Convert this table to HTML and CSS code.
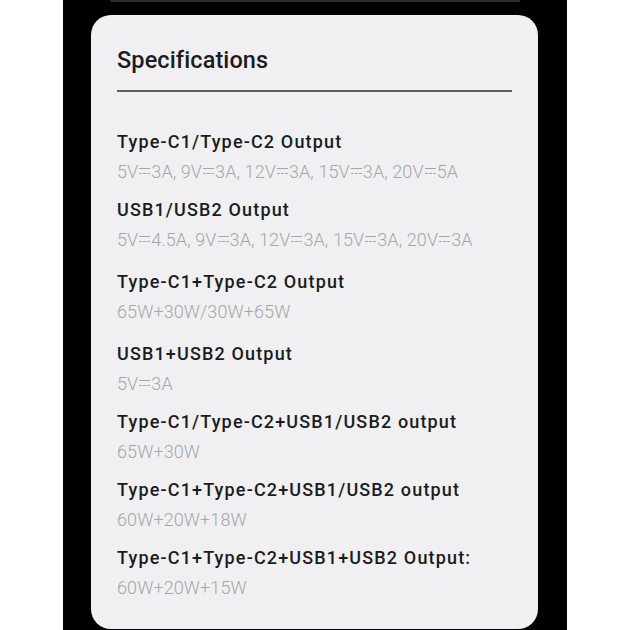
FILE: index.html
```html
<!DOCTYPE html>
<html>
<head>
<meta charset="utf-8">
<link rel="stylesheet" href="styles.css">
</head>
<body>
<div class="stage">
  <div class="prev-edge"></div>
  <div class="card">
    <h1 class="heading">Specifications</h1>
    <div class="divider"></div>
    <div class="specs">
      <div class="spec">
        <div class="title">Type-C1/Type-C2 Output</div>
        <div class="value">5V<span class="dc"></span>3A, 9V<span class="dc"></span>3A, 12V<span class="dc"></span>3A, 15V<span class="dc"></span>3A, 20V<span class="dc"></span>5A</div>
      </div>
      <div class="spec">
        <div class="title">USB1/USB2 Output</div>
        <div class="value">5V<span class="dc"></span>4.5A, 9V<span class="dc"></span>3A, 12V<span class="dc"></span>3A, 15V<span class="dc"></span>3A, 20V<span class="dc"></span>3A</div>
      </div>
      <div class="spec spec-wide">
        <div class="title">Type-C1+Type-C2 Output</div>
        <div class="value">65W+30W/30W+65W</div>
      </div>
      <div class="spec spec-wide">
        <div class="title">USB1+USB2 Output</div>
        <div class="value">5V<span class="dc"></span>3A</div>
      </div>
      <div class="spec">
        <div class="title">Type-C1/Type-C2+USB1/USB2 output</div>
        <div class="value">65W+30W</div>
      </div>
      <div class="spec">
        <div class="title">Type-C1+Type-C2+USB1/USB2 output</div>
        <div class="value">60W+20W+18W</div>
      </div>
      <div class="spec">
        <div class="title">Type-C1+Type-C2+USB1+USB2 Output:</div>
        <div class="value">60W+20W+15W</div>
      </div>
    </div>
  </div>
</div>
</body>
</html>
```
FILE: styles.css
```css
* { box-sizing: border-box; }
html, body { margin: 0; padding: 0; background: #ffffff; }
body { width: 630px; height: 630px; overflow: hidden; }

.stage {
  margin-left: 63px;
  width: 504px;
  height: 630px;
  background: #000000;
  display: flex;
  flex-direction: column;
  align-items: flex-start;
}

.prev-edge {
  margin-left: 47px;
  width: 410px;
  height: 2px;
  background: #2e2e2e;
}

.card {
  margin-top: 13px;
  margin-left: 28px;
  width: 447px;
  height: 614px;
  background: #f0f0f2;
  border-radius: 20px;
  padding: 0 26px 0 26px;
  font-family: Roboto, "Liberation Sans", sans-serif;
}

.heading {
  margin: 0;
  padding-top: 29px;
  font-size: 23.5px;
  line-height: 32px;
  font-weight: 500;
  color: #1c1c1e;
  letter-spacing: 0.1px;
}

.divider {
  margin-top: 14px;
  width: 395px;
  height: 2px;
  background: #606062;
}

.specs {
  padding-top: 38px;
  display: flex;
  flex-direction: column;
  gap: 11px;
}

.spec-wide { margin-top: 4px; }

.title {
  font-size: 18px;
  line-height: 24px;
  font-weight: 500;
  color: #1c1c1e;
  letter-spacing: 1.15px;
  white-space: nowrap;
}

.value {
  margin-top: 3px;
  font-size: 18px;
  line-height: 30px;
  font-weight: 300;
  color: #a6a6a8;
  letter-spacing: 0.1px;
  white-space: nowrap;
}

.dc {
  display: inline-block;
  width: 11px;
  height: 6px;
  margin: 0 1px;
  border-top: 1.5px solid #a6a6a8;
  border-bottom: 1.5px dashed #a6a6a8;
  vertical-align: 4px;
}
```
